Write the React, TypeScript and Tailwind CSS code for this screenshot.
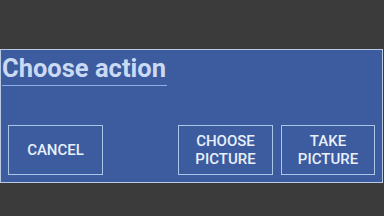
export default function App() {
  return (
    <div className="h-[216px] w-[384px] bg-[#3b3b3b] pt-[49px] font-['Roboto',sans-serif]">
      <div className="flex h-[134px] w-[383px] flex-col border border-[#b9c9e2] bg-[#3c5c9f]">
        <div className="pl-[1px] pt-[3px]">
          <div className="inline-block border-b-[1.5px] border-[#8fb0e6] pb-[2px] pr-[1px] text-[25.5px] font-bold leading-[30px] text-[#cadaf3]">
            Choose action
          </div>
        </div>
        <div className="mt-auto flex items-end gap-[8px] px-[7px] pb-[7px]">
          <button className="mr-auto flex h-[50px] w-[95px] items-center justify-center border border-[#a9c6e6] text-[15px] font-medium leading-[18px] text-[#e8f0fb]">
            CANCEL
          </button>
          <button className="flex h-[50px] w-[95px] items-center justify-center border border-[#a9c6e6] text-[15px] font-medium leading-[18px] text-[#e8f0fb]">
            CHOOSE
            <br />
            PICTURE
          </button>
          <button className="flex h-[50px] w-[94px] items-center justify-center border border-[#a9c6e6] text-[15px] font-medium leading-[18px] text-[#e8f0fb]">
            TAKE
            <br />
            PICTURE
          </button>
        </div>
      </div>
    </div>
  );
}
